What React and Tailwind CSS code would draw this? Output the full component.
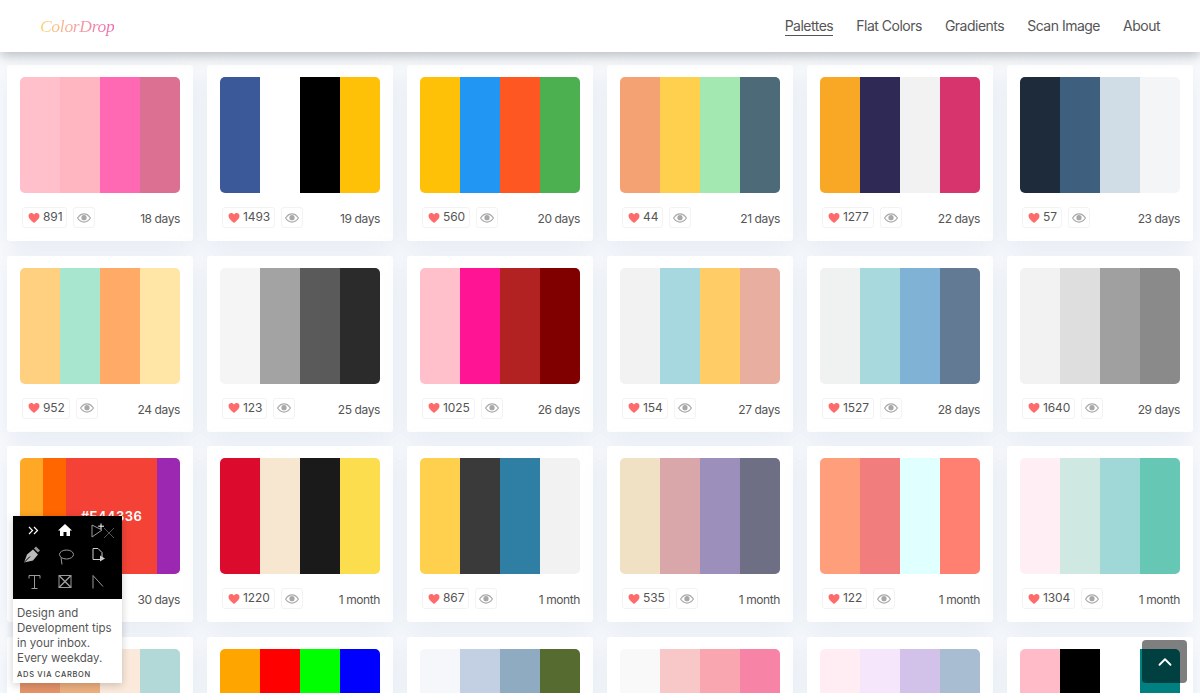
import React from 'react';
import { ChevronUp } from 'lucide-react';

const palettes = [
  { colors: ['#FFC0CB', '#FFB6C1', '#FF69B4', '#DB7093'], likes: 891, age: '18 days' },
  { colors: ['#3B5998', '#FFFFFF', '#000000', '#FFC107'], likes: 1493, age: '19 days' },
  { colors: ['#FFC107', '#2196F3', '#FF5722', '#4CAF50'], likes: 560, age: '20 days' },
  { colors: ['#F4A273', '#FFD04D', '#A2E8B0', '#4D6A78'], likes: 44, age: '21 days' },
  { colors: ['#F9A825', '#2E2A55', '#F2F2F2', '#D7336C'], likes: 1277, age: '22 days' },
  { colors: ['#1D2B3A', '#3E5F7E', '#D0DDE7', '#F3F5F7'], likes: 57, age: '23 days' },
  { colors: ['#FFD07F', '#A8E6CF', '#FFAB67', '#FFE6A7'], likes: 952, age: '24 days' },
  { colors: ['#F5F5F5', '#A3A3A3', '#5A5A5A', '#2B2B2B'], likes: 123, age: '25 days' },
  { colors: ['#FFC0CB', '#FF1493', '#B22222', '#800000'], likes: 1025, age: '26 days' },
  { colors: ['#F2F2F2', '#A8D8DF', '#FFCC66', '#E8AFA1'], likes: 154, age: '27 days' },
  { colors: ['#F0F1F1', '#A8D9DC', '#7FB2D5', '#627A93'], likes: 1527, age: '28 days' },
  { colors: ['#F2F2F2', '#DEDEDE', '#A0A0A0', '#8A8A8A'], likes: 1640, age: '29 days' },
  { age: '30 days', hovered: true },
  { colors: ['#DC0A2D', '#F7E6D0', '#1A1A1A', '#FCDD4D'], likes: 1220, age: '1 month' },
  { colors: ['#FFD04D', '#3A3A3A', '#2E7FA3', '#F2F2F2'], likes: 867, age: '1 month' },
  { colors: ['#F0E0C4', '#D9A7A9', '#9C8FBC', '#6E6E85'], likes: 535, age: '1 month' },
  { colors: ['#FF9E7A', '#F27D7D', '#E0FFFF', '#FF7F70'], likes: 122, age: '1 month' },
  { colors: ['#FFEEF4', '#D0E8E2', '#A0D8D8', '#66C8B4'], likes: 1304, age: '1 month' },
  // last row runs off the bottom of the window, no footer visible
  { colors: ['#E5936A', '#EDB07F', '#FBEADB', '#B2D8D8'] },
  { colors: ['#FFA500', '#FF0000', '#00FF00', '#0000FF'] },
  { colors: ['#F5F7FA', '#C3CFE2', '#8FABC1', '#556B2F'] },
  { colors: ['#F9F9F9', '#F8C8C8', '#FAA6B0', '#F783A6'] },
  { colors: ['#FFEDF3', '#F6E6FC', '#D2C1E8', '#A8BCD2'] },
  { colors: ['#FFBCC8', '#000000', '#FFFFFF', '#008080'] },
];

const navItems = ['Palettes', 'Flat Colors', 'Gradients', 'Scan Image', 'About'];

function HeartIcon() {
  return (
    <svg viewBox="0 0 24 24" className="w-[12px] h-[12px] shrink-0" fill="#FF6B6B">
      <path d="M12 22 C5 16 1 12.5 1 7.8 C1 4.2 3.7 2 6.7 2 C8.8 2 10.8 3.1 12 5.2 C13.2 3.1 15.2 2 17.3 2 C20.3 2 23 4.2 23 7.8 C23 12.5 19 16 12 22 Z" />
    </svg>
  );
}

function EyeIcon() {
  return (
    <svg viewBox="0 0 24 16" className="w-[14px] h-[10px]" fill="none">
      <path d="M1 8 C4 3.5 8 1 12 1 C16 1 20 3.5 23 8 C20 12.5 16 15 12 15 C8 15 4 12.5 1 8 Z" stroke="#A8A8A8" strokeWidth="2" />
      <circle cx="12" cy="7.5" r="4.5" fill="#A8A8A8" />
    </svg>
  );
}

function Swatches({ item }) {
  if (item.hovered) {
    return (
      <div className="flex h-[116px] rounded-[5px] overflow-hidden">
        <div className="w-[23px] bg-[#FFA726]" />
        <div className="w-[23px] bg-[#FF6600]" />
        <div className="flex-1 bg-[#F44336] flex items-center justify-center text-white text-[13px] font-semibold tracking-[0.5px]">#F44336</div>
        <div className="w-[23px] bg-[#9C27B0]" />
      </div>
    );
  }
  return (
    <div className="flex h-[116px] rounded-[5px] overflow-hidden">
      {item.colors.map((c, i) => (
        <div key={i} className="flex-1" style={{ backgroundColor: c }} />
      ))}
    </div>
  );
}

function PaletteCard({ item }) {
  return (
    <div className="bg-white h-[176px] rounded-[3px] px-[13px] pt-[12px] shadow-[0_8px_24px_rgba(190,205,225,0.35)]">
      <Swatches item={item} />
      {item.age && (
        <div className="flex items-start justify-between mt-[14px] pl-[2px]">
          {item.likes && (
            <div className="flex gap-[6px]">
              <div className="flex items-center gap-[3px] h-[21px] pl-[5px] pr-[4px] border border-[#f3f3f3] rounded-[3px] text-[12px] leading-none text-[#555] tracking-[-0.1px]">
                <HeartIcon />
                <span className="-mt-[1px]">{item.likes}</span>
              </div>
              <div className="flex items-center justify-center h-[21px] w-[22px] border border-[#f3f3f3] rounded-[3px]">
                <EyeIcon />
              </div>
            </div>
          )}
          <span className="ml-auto text-[12px] leading-none text-[#555] tracking-[-0.4px] mt-[6px]">{item.age}</span>
        </div>
      )}
    </div>
  );
}

function AdArt() {
  const stroke = '#9a9a9a';
  return (
    <svg viewBox="0 0 109 83" className="w-[109px] h-[83px] block bg-black" fill="none">
      <path d="M16 11 l3.5 3.5 -3.5 3.5 M21 11 l3.5 3.5 -3.5 3.5" stroke="#fff" strokeWidth="1.2" />
      <path d="M52 8 L59 14.5 L57 14.5 L57 20 L53.5 20 L53.5 16 L50.5 16 L50.5 20 L47 20 L47 14.5 L45 14.5 Z" fill="#fff" />
      <path d="M79 9 L79 21 L89 14 Z" stroke={stroke} strokeWidth="1" />
      <path d="M88 7.5 V13 M85.2 10.2 H91" stroke="#fff" strokeWidth="1" />
      <path d="M91 12 L101 22 M101 12 L91 22" stroke="#555" strokeWidth="1" />
      <g transform="translate(0 5.5)">
        <path d="M11 41 L14 33 L20 28 L25 33 L20 39 Z" fill="#bbb" />
        <path d="M11 41 L17 35" stroke="#000" strokeWidth="1" />
        <path d="M21 27 L23 25 L27 29 L25 31 Z" fill="#999" />
        <ellipse cx="53.5" cy="33" rx="7" ry="4.5" stroke={stroke} strokeWidth="1" />
        <path d="M48 36 L49 43" stroke={stroke} strokeWidth="1" />
        <path d="M80 27 H85 L89 31 V38 H80 Z" stroke="#ccc" strokeWidth="1" />
        <path d="M87 34 L92 37 L87 40 Z" fill="#ccc" />
      </g>
      <g transform="translate(0 6.5)">
        <path d="M16 53 V56 M16 53 H27 V56 M21.5 53 V66 M18.5 66 H24.5" stroke={stroke} strokeWidth="1" />
        <rect x="46" y="53" width="12" height="12" stroke={stroke} strokeWidth="1" />
        <path d="M46 53 L58 65 M58 53 L46 65" stroke={stroke} strokeWidth="1.5" />
        <path d="M80 66 V53 L90 64" stroke={stroke} strokeWidth="1" />
      </g>
    </svg>
  );
}

export default function App() {
  return (
    <div className="relative h-[693px] overflow-hidden bg-[#fafbfd] font-['Inter','Open_Sans',sans-serif]">
      <header className="relative z-10 h-[52px] bg-white flex items-center justify-between px-[40px] shadow-[0_3px_12px_rgba(70,80,90,0.4)]">
        <span className="font-['Liberation_Serif',serif] italic text-[17.5px] tracking-[-0.3px] bg-gradient-to-r from-[#FBD46D] via-[#F4A0A0] to-[#E86AB0] bg-clip-text text-transparent">ColorDrop</span>
        <nav className="flex gap-[23px] text-[14px] leading-[17px] tracking-[-0.5px] text-[#555]">
          {navItems.map((n, i) => (
            <a key={n} className={i === 0 ? 'border-b border-[#555] pb-[1px]' : 'pb-[1px]'}>{n}</a>
          ))}
        </nav>
      </header>

      <main className="grid grid-cols-6 gap-x-[14px] gap-y-[14.67px] px-[7px] pt-[13px]">
        {palettes.map((p, i) => (
          <PaletteCard key={i} item={p} />
        ))}
      </main>

      <aside className="absolute z-20 left-[13px] top-[516px] w-[109px] h-[167px] bg-white shadow-[0_2px_8px_rgba(0,0,0,0.2)]">
        <AdArt />
        <div className="px-[4px] pt-[7px]">
          <p className="text-[11.5px] leading-[15px] text-[#555]">Design and Development tips in your inbox. Every weekday.</p>
          <p className="mt-[4px] text-[7.5px] leading-[10px] tracking-[0.7px] font-medium text-[#444]">ADS VIA CARBON</p>
        </div>
      </aside>

      <button className="absolute z-20 left-[1142px] top-[640px] w-[45px] h-[43px] rounded-[4px] bg-black/50 flex items-center justify-center text-white">
        <ChevronUp className="w-[22px] h-[22px]" strokeWidth={2} />
      </button>
    </div>
  );
}
